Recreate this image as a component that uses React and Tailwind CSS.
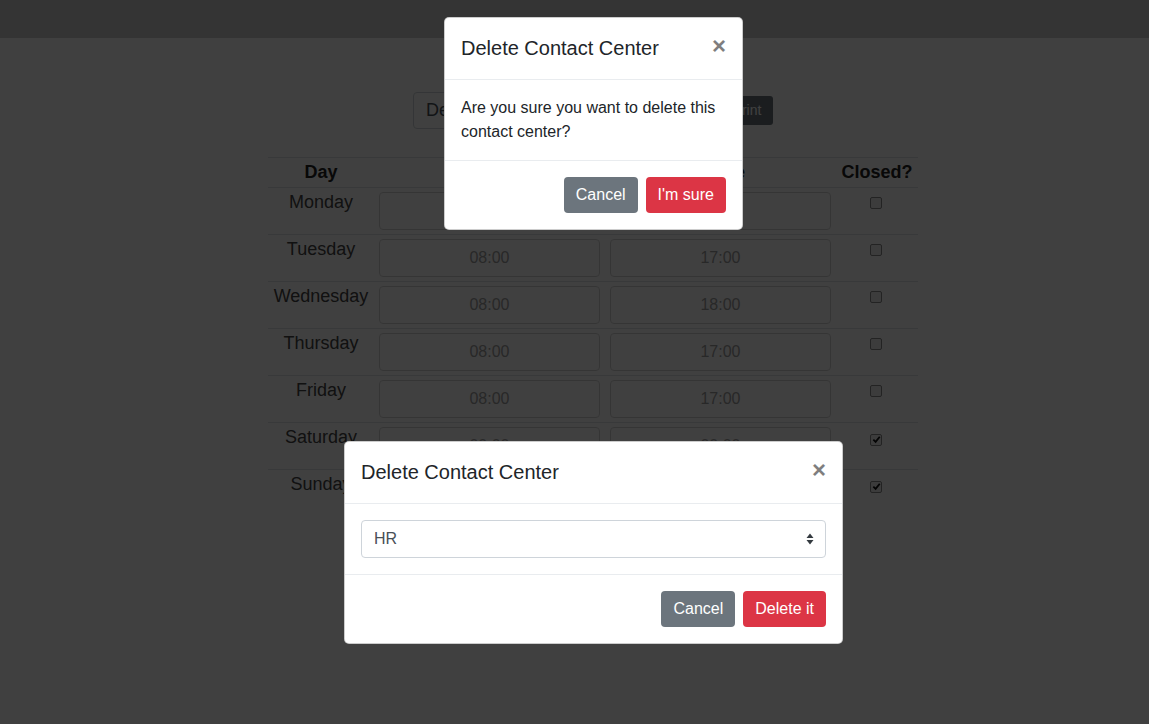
import React from 'react';

const hours = [
  { day: 'Monday', open: '08:00', close: '17:00', closed: false },
  { day: 'Tuesday', open: '08:00', close: '17:00', closed: false },
  { day: 'Wednesday', open: '08:00', close: '18:00', closed: false },
  { day: 'Thursday', open: '08:00', close: '17:00', closed: false },
  { day: 'Friday', open: '08:00', close: '17:00', closed: false },
  { day: 'Saturday', open: '00:00', close: '00:00', closed: true },
  { day: 'Sunday', open: '00:00', close: '00:00', closed: true },
];

function Check({ checked }) {
  return (
    <span className="mt-[2px] inline-flex h-[12px] w-[12px] items-center justify-center rounded-[2px] border border-[#8a8a8a] bg-[#efefef]">
      {checked && (
        <svg viewBox="0 0 10 10" className="h-[9px] w-[9px]">
          <path d="M1.5 5.2 L4 7.6 L8.6 2" fill="none" stroke="#111" strokeWidth="2" />
        </svg>
      )}
    </span>
  );
}

function Modal({ className, children }) {
  return (
    <div className={`absolute rounded-[5px] border border-black/20 bg-white text-[#212529] ${className}`}>
      <div className="flex items-start border-b border-[#e9ecef] px-4 pt-[15px] pb-4">
        <h5 className="text-[20px] leading-[30px]">Delete Contact Center</h5>
        <button className="-mx-4 -mt-[15px] -mb-4 ml-auto p-4 text-[24px] font-bold leading-none text-black opacity-50">×</button>
      </div>
      {children}
    </div>
  );
}

function Footer({ label }) {
  return (
    <div className="flex justify-end gap-2 border-t border-[#e9ecef] p-4">
      <button className="h-9 rounded-[4px] bg-[#6c757d] px-3 text-[16px] text-white">Cancel</button>
      <button className="h-9 rounded-[4px] bg-[#dc3545] px-3 text-[16px] text-white">{label}</button>
    </div>
  );
}

export default function App() {
  return (
    <div className="relative h-[724px] overflow-hidden bg-white font-['Liberation_Sans',Arial,sans-serif]">
      <nav className="h-[38px] bg-[#d0d0d0]" />

      <main className="w-[650px] pt-[54px]" style={{ marginLeft: 268 }}>
        <div className="flex items-center justify-center gap-2">
          <input
            readOnly
            value="Default"
            className="h-[37px] w-[300px] rounded-[4px] border border-[#ced4da] px-3 text-[18px] text-[#495057] outline-none"
          />
          <button className="h-[29px] w-[52px] rounded-[3px] bg-[#6c757d] text-[14px] text-white">Print</button>
        </div>

        <table className="mt-[28px] w-[650px] table-fixed border-collapse">
          <colgroup>
            <col className="w-[106px]" />
            <col className="w-[231px]" />
            <col className="w-[231px]" />
            <col className="w-[82px]" />
          </colgroup>
          <thead>
            <tr className="border-t border-[#dee2e6] text-[18px] leading-[21px] text-[#222]">
              <th className="py-1 font-bold">Day</th>
              <th className="py-1 font-bold">Open</th>
              <th className="py-1 font-bold">Close</th>
              <th className="py-1 font-bold">Closed?</th>
            </tr>
          </thead>
          <tbody>
            {hours.map(h => (
              <tr key={h.day} className="border-t border-[#dee2e6]">
                <td className="px-0 py-1 text-center align-top text-[18px] leading-[21px] text-[#444]">{h.day}</td>
                <td className="px-[5px] py-1 align-top">
                  <input readOnly value={h.open} className="h-[38px] w-full rounded-[4px] border border-[#d4d4d4] text-center text-[16px] text-[#a0a0a0] outline-none" />
                </td>
                <td className="px-[5px] py-1 align-top">
                  <input readOnly value={h.close} className="h-[38px] w-full rounded-[4px] border border-[#d4d4d4] text-center text-[16px] text-[#a0a0a0] outline-none" />
                </td>
                <td className="py-1 pr-[2px] text-center align-top">
                  <Check checked={h.closed} />
                </td>
              </tr>
            ))}
          </tbody>
        </table>
      </main>

      <div className="absolute inset-0 bg-black/75" />

      <Modal className="left-[444px] top-[17px] w-[299px]">
        <div className="p-4 text-[16px] leading-[24px]">
          Are you sure you want to delete this contact center?
        </div>
        <Footer label="I'm sure" />
      </Modal>

      <Modal className="left-[344px] top-[441px] w-[499px]">
        <div className="p-4">
          <div className="relative">
            <select className="h-[38px] w-full appearance-none rounded-[4px] border border-[#ced4da] bg-white px-3 text-[16px] text-[#495057] outline-none">
              <option>HR</option>
            </select>
            <svg viewBox="0 0 8 12" className="pointer-events-none absolute right-[12px] top-[13px] h-[12px] w-[8px]">
              <path d="M4 0.5 L7.5 5 H0.5 Z M4 11.5 L7.5 7 H0.5 Z" fill="#343a40" />
            </svg>
          </div>
        </div>
        <Footer label="Delete it" />
      </Modal>
    </div>
  );
}
